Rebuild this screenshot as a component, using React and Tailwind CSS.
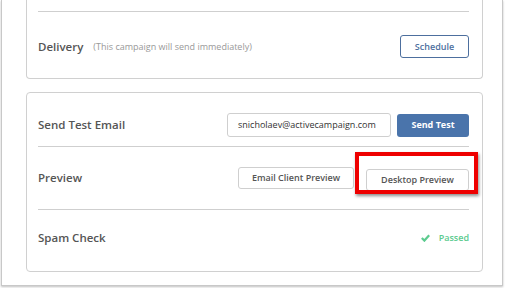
import React from "react";

const font = { fontFamily: '"Open Sans", "Noto Sans", sans-serif' };

export default function App() {
  return (
    <div className="w-[505px] h-[288px] bg-white overflow-hidden" style={font}>
      <div className="ml-px w-[502px] h-[286px] border-x border-b border-[#c8c8c8] bg-white shadow-[0_1px_2px_rgba(0,0,0,0.25)] px-[24px]">
        {/* Card 1 */}
        <div className="w-[457px] border-x border-b border-[#d0d0d0] rounded-b-[4px] pl-[11px] pr-[13px] pt-[11px] pb-[20px]">
          <div className="h-px bg-[#cfcfcf]" />
          <div className="flex items-center justify-between pt-[23px]">
            <div className="flex items-center gap-[10px]">
              <span className="text-[11.5px] font-semibold text-[#555]">Delivery</span>
              <span className="text-[9px] text-[#999]">(This campaign will send immediately)</span>
            </div>
            <button className="h-[23px] w-[69px] rounded-[3px] border border-[#4d6f9e] text-[9px] font-semibold text-[#4d6f9e] bg-white">
              Schedule
            </button>
          </div>
        </div>

        {/* Card 2 */}
        <div className="mt-[13px] w-[457px] border border-[#d0d0d0] rounded-[4px] pl-[11px] pr-[13px]">
          <div className="flex items-center justify-between pt-[20px] pb-[9px]">
            <span className="text-[11.5px] font-semibold text-[#555]">Send Test Email</span>
            <div className="flex items-center gap-[6px]">
              <div className="h-[24px] w-[164px] rounded-[3px] border border-[#cfcfcf] flex items-center pl-[10px] text-[9px] text-[#333]">
                snicholaev@activecampaign.com
              </div>
              <button className="h-[23px] w-[72px] rounded-[3px] bg-[#4a74ab] text-[9px] font-bold text-white">
                Send Test
              </button>
            </div>
          </div>
          <div className="h-px bg-[#cfcfcf]" />
          <div className="flex items-center justify-between h-[62px]">
            <span className="text-[11.5px] font-semibold text-[#555]">Preview</span>
            <div className="flex items-center gap-[12px]">
              <button className="h-[22px] w-[116px] rounded-[3px] border border-[#cfcfcf] bg-white text-[9px] font-semibold text-[#555]">
                Email Client Preview
              </button>
              <div className="relative">
                <button className="h-[22px] w-[103px] rounded-[3px] border border-[#cfcfcf] bg-white text-[9px] font-semibold text-[#555]">
                  Desktop Preview
                </button>
                <div className="absolute left-[-11px] top-[-13px] w-[123px] h-[42px] border-[4px] border-[#ee0000] shadow-[1px_2px_3px_rgba(0,0,0,0.45)] pointer-events-none" />
              </div>
            </div>
          </div>
          <div className="h-px bg-[#cfcfcf]" />
          <div className="flex items-center justify-between h-[61px] pb-[6px]">
            <span className="text-[11.5px] font-semibold text-[#555]">Spam Check</span>
            <div className="flex items-center gap-[9px] text-[9px] font-semibold text-[#5ccb8f]">
              <svg width="9" height="8" viewBox="0 0 9 8">
                <path d="M0.8 4 L3.4 6.6 L8.2 1.2" fill="none" stroke="#5ccb8f" strokeWidth="2.2" />
              </svg>
              Passed
            </div>
          </div>
        </div>
      </div>
    </div>
  );
}
